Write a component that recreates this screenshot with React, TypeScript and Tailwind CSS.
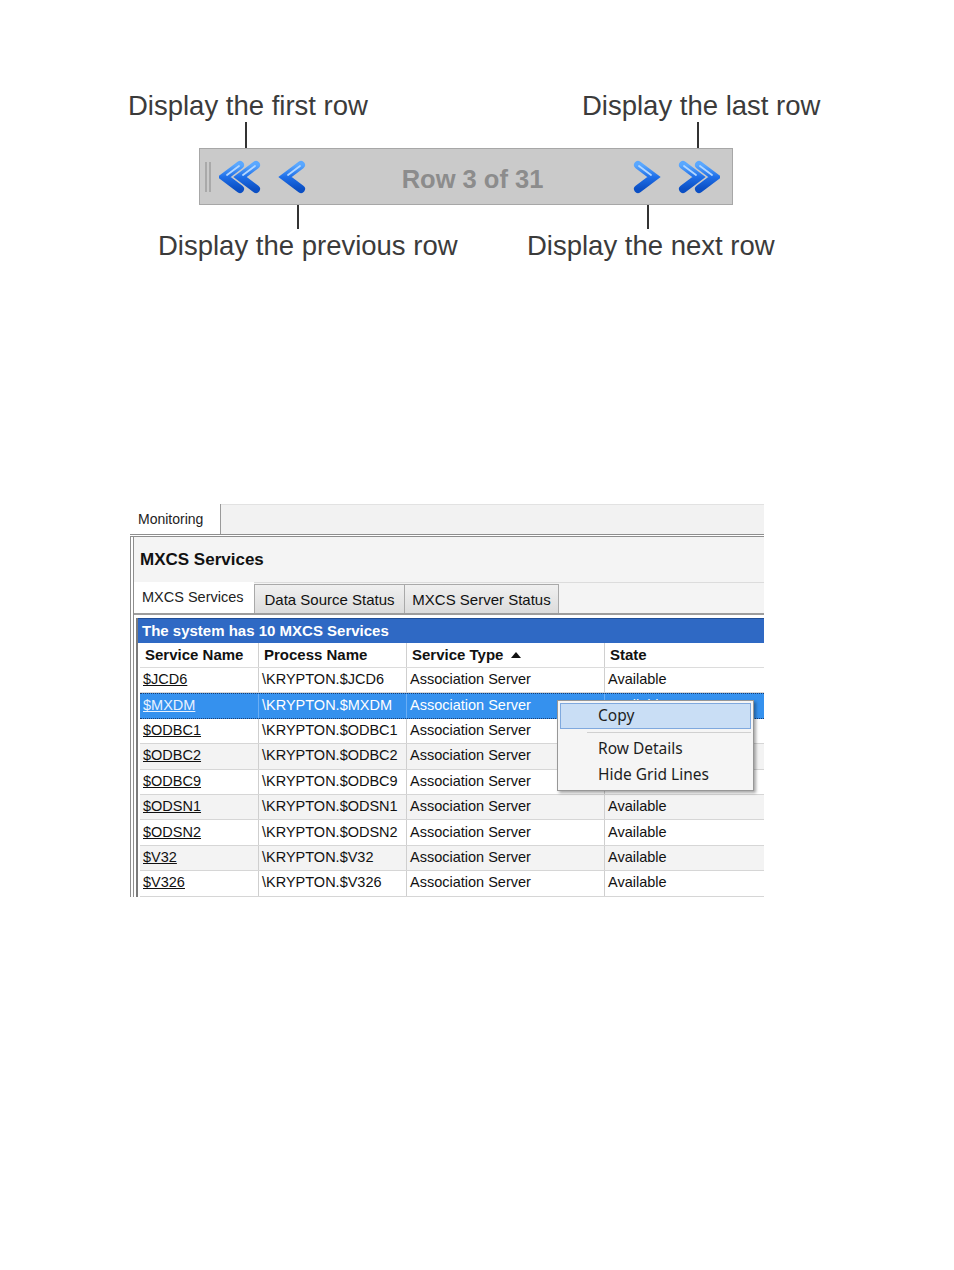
import React from 'react';

const Chevron: React.FC<{ dir: 'left' | 'right'; double?: boolean; id: string }> = ({ dir, double, id }) => {
  const w = double ? 42 : 32;
  const arm = (x0: number) =>
    dir === 'left'
      ? `M${x0 + 21} 5 L${x0 + 5} 17 L${x0 + 21} 29`
      : `M${x0 + 5} 5 L${x0 + 21} 17 L${x0 + 5} 29`;
  const offs = double ? [0, 16] : [3];
  return (
    <svg width={w} height={36} viewBox={`0 0 ${w} 34`}>
      <defs>
        <linearGradient id={id} x1="0" y1="0" x2="0" y2="1">
          <stop offset="0" stopColor="#5aa8ff" />
          <stop offset="0.5" stopColor="#1f6fe8" />
          <stop offset="1" stopColor="#0b4fc4" />
        </linearGradient>
      </defs>
      {offs.map((o) => (
        <g key={o}>
          <path d={arm(o)} fill="none" stroke={`url(#${id})`} strokeWidth={8} strokeLinecap="round" strokeLinejoin="miter" />
          <path
            d={dir === 'left' ? `M${o + 20} 6 L${o + 8} 15` : `M${o + 6} 6 L${o + 18} 15`}
            fill="none"
            stroke="#b4d7ff"
            strokeWidth={1.8}
            strokeLinecap="round"
          />
        </g>
      ))}
    </svg>
  );
};

const PagerFigure: React.FC = () => {
  const label = "absolute text-[27.5px] text-[#3b3b3b] leading-none whitespace-nowrap";
  return (
    <div className="relative h-[300px] w-[954px] font-['Liberation_Sans',Arial,sans-serif]">
      <div className={`${label} left-[128px] top-[92px]`}>Display the first row</div>
      <div className={`${label} left-[582px] top-[92px]`}>Display the last row</div>
      <div className={`${label} left-[158px] top-[232px]`}>Display the previous row</div>
      <div className={`${label} left-[527px] top-[232px]`}>Display the next row</div>

      <div className="absolute left-[245px] top-[122px] h-[30px] w-[2px] bg-[#333]" />
      <div className="absolute left-[697px] top-[122px] h-[30px] w-[2px] bg-[#333]" />
      <div className="absolute left-[297px] top-[200px] h-[29px] w-[2px] bg-[#333]" />
      <div className="absolute left-[647px] top-[200px] h-[29px] w-[2px] bg-[#333]" />

      <div className="absolute left-[199px] top-[148px] flex h-[57px] w-[534px] items-center border border-[#a7a7a7] bg-[#cacaca] pl-[5px]">
        <div className="mr-[8px] flex h-[30px] gap-[2px]">
          <div className="w-[2px] bg-[#a9a9a9]" />
          <div className="w-[2px] bg-[#a9a9a9]" />
        </div>
        <Chevron dir="left" double id="g1" />
        <div className="w-[16px]" />
        <Chevron dir="left" id="g2" />
        <div className="flex-1 pt-[5px] pl-[6px] text-center text-[25.5px] font-bold text-[#8c8c8c]">Row 3 of 31</div>
        <Chevron dir="right" id="g3" />
        <div className="w-[16px]" />
        <Chevron dir="right" double id="g4" />
        <div className="w-[12px]" />
      </div>
    </div>
  );
};

const rows = [
  ['$JCD6', 'Available'],
  ['$MXDM', 'Available'],
  ['$ODBC1', ''],
  ['$ODBC2', ''],
  ['$ODBC9', ''],
  ['$ODSN1', 'Available'],
  ['$ODSN2', 'Available'],
  ['$V32', 'Available'],
  ['$V326', 'Available'],
];

const cols = 'grid grid-cols-[119px_148px_198px_1fr]';

const Monitoring: React.FC = () => {
  return (
    <div className="relative ml-[130px] mt-[204px] w-[634px] font-['Liberation_Sans',Tahoma,sans-serif] text-[15px] text-[#111]">
      {/* top tab strip */}
      <div className="flex h-[33px] border-b-[3px] border-double border-[#8e8e8e]">
        <div className="flex w-[91px] items-center border-r border-[#9a9a9a] bg-white pl-[8px] text-[14px] text-[#222]">
          Monitoring
        </div>
        <div className="flex-1 border-t border-[#e2e2e2] bg-[#f2f2f2]" />
      </div>

      <div className="border-l-[4px] border-double border-[#8e8e8e]">
        <div className="flex h-[46px] items-center border-b border-[#dcdcdc] bg-[#f4f4f4] pl-[6px] text-[17px] font-bold">
          MXCS Services
        </div>

        {/* sub tabs */}
        <div className="flex h-[32px] items-end border-b-[2px] border-[#9d9d9d] bg-[#f4f4f4]">
          <div className="flex h-[31px] w-[120px] items-center bg-white pl-[8px] text-[14.5px] text-[#222]">
            MXCS Services
          </div>
          <div className="flex h-[29px] w-[151px] items-center justify-center border border-b-0 border-[#a9a9a9] bg-gradient-to-b from-[#f0f0f0] to-[#dcdcdc] pt-[2px] text-[15px]">
            Data Source Status
          </div>
          <div className="flex h-[29px] w-[154px] items-center justify-center border border-b-0 border-l-0 border-[#a9a9a9] bg-gradient-to-b from-[#f0f0f0] to-[#dcdcdc] pt-[2px] text-[15px]">
            MXCS Server Status
          </div>
        </div>

        <div className="bg-white pt-[3px] pl-[2px]">
          <div className="border-l-[2px] border-[#7b7b7b]">
            <div className="flex h-[25px] items-center border-t border-[#1f4e98] bg-[#2f69c4] pl-[4px] text-[15px] font-bold text-white">
              The system has 10 MXCS Services
            </div>
            <div className="border-l-[2px] border-white">
              <div className={`${cols} h-[25px] border-b border-[#dcdcdc] font-bold`}>
                <div className="flex items-center border-r border-[#d0d0d0] pl-[5px]">Service Name</div>
                <div className="flex items-center border-r border-[#d0d0d0] pl-[5px]">Process Name</div>
                <div className="flex items-center gap-[8px] border-r border-[#d0d0d0] pl-[5px]">
                  Service Type
                  <svg width="10" height="6" viewBox="0 0 10 6">
                    <path d="M0 6 L5 0 L10 6 Z" fill="#111" />
                  </svg>
                </div>
                <div className="flex items-center pl-[5px]">State</div>
              </div>
              {rows.map(([name, state], i) => {
                const sel = i === 1;
                const bg = sel ? 'bg-[#3591ee] text-white border-y border-dotted border-[#1b3d70]' : i % 2 === 1 ? 'bg-[#f3f3f3]' : 'bg-white';
                return (
                  <div key={name} className={`${cols} h-[25.4px] text-[14.5px] ${bg} ${sel ? '' : 'border-b border-[#d6d6d6]'}`}>
                    <div className={`flex items-center border-r pl-[3px] ${sel ? 'border-[#6aaef5]' : 'border-[#cfcfcf]'}`}>
                      <span className={`underline ${sel ? 'text-[#e8f2ff]' : ''}`}>{name}</span>
                    </div>
                    <div className={`flex items-center border-r pl-[3px] ${sel ? 'border-[#6aaef5]' : 'border-[#cfcfcf]'}`}>
                      {'\\KRYPTON.' + name}
                    </div>
                    <div className={`flex items-center border-r pl-[3px] ${sel ? 'border-[#6aaef5]' : 'border-[#cfcfcf]'}`}>
                      Association Server
                    </div>
                    <div className="flex items-center pl-[3px]">{state}</div>
                  </div>
                );
              })}
            </div>
          </div>
        </div>
      </div>

      {/* context menu */}
      <div className="absolute left-[427px] top-[196px] w-[197px] border border-[#979797] bg-[#f5f5f5] p-[2px] font-['Noto_Sans','Liberation_Sans',sans-serif] text-[15.5px] text-[#1e1e1e] shadow-[2px_2px_3px_rgba(0,0,0,0.35)]">
        <div className="flex h-[26px] items-center border border-[#7fa9de] bg-[#c9def5] pl-[37px]">Copy</div>
        <div className="my-[3px] ml-[27px] h-px bg-[#d0d0d0]" />
        <div className="flex h-[26px] items-center pl-[38px]">Row Details</div>
        <div className="flex h-[26px] items-center pl-[38px]">Hide Grid Lines</div>
      </div>
    </div>
  );
};

export default function App() {
  return (
    <div className="min-h-[1270px] w-[954px] bg-white">
      <PagerFigure />
      <Monitoring />
    </div>
  );
}
